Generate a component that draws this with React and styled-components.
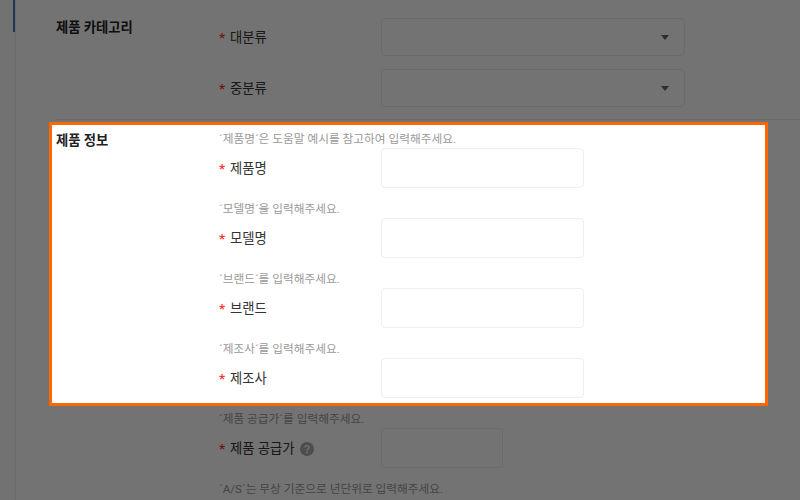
import React from "react";
import styled, { createGlobalStyle } from "styled-components";

const Global = createGlobalStyle`
  html, body { margin: 0; padding: 0; background: #fff; }
  body { width: 800px; height: 500px; overflow: hidden; font-family: Roboto, "Noto Sans CJK KR", "Noto Sans", sans-serif; }
`;

const Page = styled.div`
  position: relative;
  display: flex;
  width: 800px;
  height: 500px;
  overflow: hidden;
  background: #fff;
`;
const Rail = styled.div`
  flex: 0 0 15px;
  box-sizing: border-box;
  border-right: 1px solid #eee;
  background: #fcfcfc;
`;
const RailMarker = styled.div`
  width: 2px;
  height: 32px;
  margin-left: 13px;
  background: #3f7fc4;
`;
const Main = styled.main`
  flex: 1;
  min-width: 0;
  padding-left: 40px;
`;
const Section = styled.section`
  display: grid;
  grid-template-columns: 163px 1fr;
  align-items: start;
  padding: ${(p) => (p.$first ? "18px 0 12px" : "10px 0 0")};
  border-top: ${(p) => (p.$first ? "none" : "1px solid #eee")};
`;
const SectionTitle = styled.h2`
  margin: ${(p) => (p.$first ? "0" : "1px")} 0 0;
  font-size: 13.33px;
  line-height: 20px;
  font-weight: 700;
  color: #222;
`;
const Fields = styled.div`
  display: flex;
  flex-direction: column;
  gap: ${(p) => p.$gap}px;
`;
const Field = styled.div`
  display: flex;
  flex-direction: column;
`;
const Hint = styled.p`
  margin: 0;
  height: 18px;
  font-size: 11.7px;
  line-height: 19px;
  color: #999;
  white-space: nowrap;
`;
const Row = styled.div`
  display: flex;
  align-items: center;
`;
const Label = styled.label`
  display: flex;
  align-items: center;
  flex: 0 0 162px;
  margin-top: 1px;
  font-size: 13.33px;
  line-height: 20px;
  color: #333;
`;
const Star = styled.span`
  width: 11px;
  font-weight: 700;
  color: #f33;
`;
const HelpIcon = styled.svg`
  width: 14px;
  height: 14px;
  margin-left: 5px;
`;
const Input = styled.div`
  box-sizing: border-box;
  width: ${(p) => p.$w}px;
  height: 40px;
  border: 1px solid #eee;
  border-radius: 4px;
  background: #fff;
`;
const Select = styled.div`
  box-sizing: border-box;
  display: flex;
  align-items: center;
  justify-content: flex-end;
  width: 304px;
  height: 38px;
  padding-right: 15px;
  border: 1px solid #eee;
  border-radius: 4px;
  background: #fff;
`;
const Caret = styled.span`
  width: 0;
  height: 0;
  border-left: 4px solid transparent;
  border-right: 4px solid transparent;
  border-top: 5px solid #666;
`;
const Spotlight = styled.div`
  position: absolute;
  left: 49px;
  top: 122px;
  box-sizing: border-box;
  width: 719px;
  height: 284px;
  border: 3px solid #f60;
  box-shadow: 0 0 0 2000px rgba(0, 0, 0, 0.55);
`;

const category = ["대분류", "중분류"];
const info = [
  { hint: "´제품명´은 도움말 예시를 참고하여 입력해주세요.", label: "제품명", w: 203 },
  { hint: "´모델명´을 입력해주세요.", label: "모델명", w: 203 },
  { hint: "´브랜드´를 입력해주세요.", label: "브랜드", w: 203 },
  { hint: "´제조사´를 입력해주세요.", label: "제조사", w: 203 },
  { hint: "´제품 공급가´를 입력해주세요.", label: "제품 공급가", w: 122, help: true },
  { hint: "´A/S´는 무상 기준으로 년단위로 입력해주세요." },
];

export default function App() {
  return (
    <Page>
      <Global />
      <Rail>
        <RailMarker />
      </Rail>
      <Main>
        <Section $first>
          <SectionTitle $first>제품 카테고리</SectionTitle>
          <Fields $gap={13}>
            {category.map((c) => (
              <Row key={c}>
                <Label>
                  <Star>*</Star>
                  {c}
                </Label>
                <Select>
                  <Caret />
                </Select>
              </Row>
            ))}
          </Fields>
        </Section>
        <Section>
          <SectionTitle>제품 정보</SectionTitle>
          <Fields $gap={12}>
            {info.map((f) => (
              <Field key={f.hint}>
                <Hint>{f.hint}</Hint>
                {f.label && (
                  <Row>
                    <Label>
                      <Star>*</Star>
                      {f.label}
                      {f.help && (
                        <HelpIcon viewBox="0 0 14 14">
                          <circle cx="7" cy="7" r="7" fill="#aaa" />
                          <path
                            d="M5 5.4C5 4.3 5.9 3.6 7 3.6s2 .7 2 1.8c0 1.5-2 1.5-2 3"
                            fill="none"
                            stroke="#fff"
                            strokeWidth="1.4"
                          />
                          <circle cx="7" cy="10.4" r=".9" fill="#fff" />
                        </HelpIcon>
                      )}
                    </Label>
                    <Input $w={f.w} />
                  </Row>
                )}
              </Field>
            ))}
          </Fields>
        </Section>
      </Main>
      <Spotlight />
    </Page>
  );
}
